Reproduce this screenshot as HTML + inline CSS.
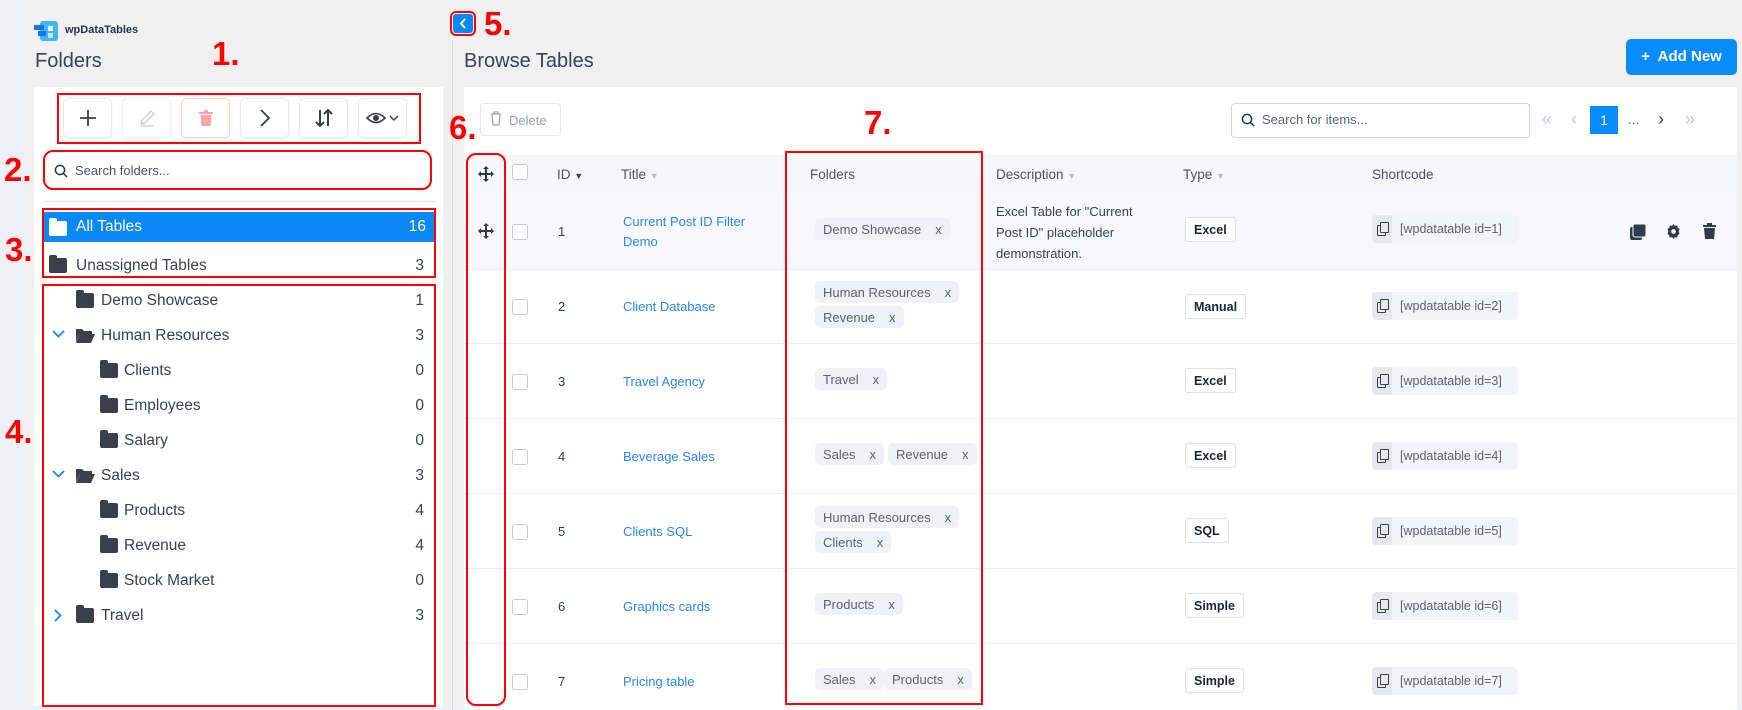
<!DOCTYPE html>
<html><head><meta charset="utf-8">
<style>
*{box-sizing:border-box;margin:0;padding:0}
body{width:1742px;height:710px;overflow:hidden;background:#f0f0f1;font-family:"Liberation Sans",Arial,sans-serif;color:#323b4b;position:relative}
.a{position:absolute}
.red{position:absolute;border:2px solid #f00}
.lbl{position:absolute;color:#f00;font-weight:bold;font-size:33px;line-height:1}
.tb{position:absolute;top:98px;width:49px;height:40px;border:1px solid #e8eaef;border-radius:5px;background:#fff;display:flex;align-items:center;justify-content:center;box-shadow:0 1px 2px rgba(0,0,0,.06)}
.tr{position:absolute;left:44px;width:390px;height:34px;font-size:15.5px;color:#3a4150}
.tr .t{position:absolute;top:8px}
.tr .c{position:absolute;right:10px;top:8px}
.fi{position:absolute;top:9px;width:18px;height:15px;background:#3a3f4a;border-radius:2px}
.fi:before{content:"";position:absolute;left:0;top:-3px;width:8px;height:4px;background:#3a3f4a;border-radius:2px 2px 0 0}
.th{position:absolute;top:167px;font-size:13.5px;color:#4b5361}
.cb{position:absolute;left:512px;width:16px;height:16px;border:1px solid #c5cad3;border-radius:3px;background:#fff}
.row{position:absolute;left:464px;width:1273px;border-top:1px solid #eceef2}
.cell{position:absolute;font-size:13px}
.link{color:#2a86f3}
.tag{position:absolute;height:22px;background:#f0f1f6;border-radius:5px;font-size:13px;color:#5b6270;padding:4px 8px;white-space:nowrap}
.tag i{font-style:normal;margin-left:14px}
.badge{position:absolute;left:1185px;height:25px;border:1px solid #dde0e6;border-radius:3px;background:#fff;font-size:12.5px;font-weight:bold;color:#1f2633;padding:5px 8px}
.sc{position:absolute;left:1372px;height:28px;width:146px;background:#f3f4f7;border-radius:4px;font-size:12.5px;color:#5b6270}
.sc .ic{position:absolute;left:0;top:0;width:20px;height:28px;background:#e6e8ec;border-radius:4px 0 0 4px}
.sc .ic:before{content:"";position:absolute;left:5px;top:10px;width:7px;height:9px;border:1.3px solid #3a3f4a;border-radius:1px;background:#e6e8ec}
.sc .ic:after{content:"";position:absolute;left:8px;top:7px;width:7px;height:9px;border:1.3px solid #3a3f4a;border-radius:1px;background:#e6e8ec}
.sc span{position:absolute;left:28px;top:7px}
</style></head><body>
<div class="a" style="left:0;top:0;width:24px;height:710px;background:#edf1f7"></div>
<div class="a" style="left:0;top:706px;width:1742px;height:4px;background:#edf1f7"></div>
<svg class="a" style="left:34px;top:21px" width="24" height="20" viewBox="0 0 24 20"><rect x="6" y="0" width="18" height="20" rx="3" fill="#3eb8f5"/><rect x="0" y="4" width="10" height="5" fill="#1a73e8"/><rect x="4" y="10" width="8" height="5" fill="#1a73e8"/><rect x="14" y="5" width="5" height="5" fill="#fff"/><rect x="14" y="12" width="5" height="5" fill="#bfe9ff"/></svg>
<div class="a" style="left:65px;top:24px;font-size:11px;font-weight:bold;color:#2a3140">wpDataTables</div>
<div class="a" style="left:35px;top:50px;font-size:20px;color:#3a4150">Folders</div>
<div class="a" style="left:34px;top:87px;width:409px;height:619px;background:#fff"></div>
<div class="tb" style="left:63px"><svg width="18" height="18"><path d="M9 1v16M1 9h16" stroke="#3a3f4a" stroke-width="1.8"/></svg></div>
<div class="tb" style="left:122px;border-color:#f0f1f4"><svg width="18" height="18"><path d="M3 15l1-4 9-9 3 3-9 9z M3 17h12" stroke="#c4c7cd" stroke-width="1.2" fill="none"/></svg></div>
<div class="tb" style="left:181px;border-color:#fbd1d1"><svg width="14" height="16"><rect x="0" y="2" width="14" height="2" fill="#f7a6a6"/><rect x="5" y="0" width="4" height="2" fill="#f7a6a6"/><path d="M1.5 5h11l-1 11h-9z" fill="#f7a6a6"/></svg></div>
<div class="tb" style="left:240px"><svg width="12" height="18"><path d="M2 1l8 8-8 8" stroke="#3a3f4a" stroke-width="1.8" fill="none"/></svg></div>
<div class="tb" style="left:299px"><svg width="18" height="18"><path d="M5 1v16M1 13l4 4 4-4M13 17V1M9 5l4-4 4 4" stroke="#3a3f4a" stroke-width="2" fill="none"/></svg></div>
<div class="tb" style="left:358px"><svg width="34" height="14"><path d="M1 7q9-9 18 0q-9 9-18 0z" stroke="#3a3f4a" stroke-width="1.6" fill="none"/><circle cx="10" cy="7" r="3" fill="#3a3f4a"/><path d="M24 5l4 4 4-4" stroke="#3a3f4a" stroke-width="1.5" fill="none"/></svg></div>
<div class="red" style="left:57px;top:93px;width:364px;height:51px"></div>
<div class="a" style="left:43px;top:150px;width:389px;height:40px;border:2px solid #f00;border-radius:10px;background:#fff"></div>
<svg class="a" style="left:54px;top:164px" width="14" height="14"><circle cx="6" cy="6" r="4.6" stroke="#2a3140" stroke-width="1.5" fill="none"/><path d="M9.5 9.5l3.5 3.5" stroke="#2a3140" stroke-width="1.5"/></svg>
<div class="a" style="left:75px;top:163px;font-size:13px;color:#4b5361">Search folders...</div>
<div class="a" style="left:44px;top:201px;width:392px;height:1px;background:#dcdfe4"></div>
<div class="a" style="left:44px;top:212px;width:392px;height:30px;background:#0a88f5"></div>
<div class="fi" style="left:49px;top:221px;background:#fff"></div><div class="a" style="left:49px;top:218px;width:8px;height:4px;background:#fff;border-radius:2px 2px 0 0"></div>
<div class="a" style="left:76px;top:218px;font-size:15.5px;color:#fff">All Tables</div>
<div class="a" style="left:400px;top:218px;width:26px;text-align:right;font-size:15.5px;color:#fff">16</div>
<div class="tr" style="top:249px"><div class="fi" style="left:5px"></div><div class="t" style="left:32px">Unassigned Tables</div><div class="c">3</div></div>
<div class="red" style="left:42px;top:208px;width:394px;height:70px"></div>
<div class="tr" style="top:284px"><div class="fi" style="left:32px"></div><div class="t" style="left:57px">Demo Showcase</div><div class="c">1</div></div>
<div class="tr" style="top:319px"><svg class="a" style="left:8px;top:11px" width="13" height="8"><path d="M1 1l5.5 5.5L12 1" stroke="#1a86f0" stroke-width="1.8" fill="none"/></svg><svg class="a" style="left:32px;top:8px" width="19" height="16"><path d="M0 2h6l2 2h8v3H4L0 15z" fill="#3a3f4a"/><path d="M4 7h15l-4 9H0z" fill="#3a3f4a"/></svg><div class="t" style="left:57px">Human Resources</div><div class="c">3</div></div>
<div class="tr" style="top:354px"><div class="fi" style="left:56px"></div><div class="t" style="left:80px">Clients</div><div class="c">0</div></div>
<div class="tr" style="top:389px"><div class="fi" style="left:56px"></div><div class="t" style="left:80px">Employees</div><div class="c">0</div></div>
<div class="tr" style="top:424px"><div class="fi" style="left:56px"></div><div class="t" style="left:80px">Salary</div><div class="c">0</div></div>
<div class="tr" style="top:459px"><svg class="a" style="left:8px;top:11px" width="13" height="8"><path d="M1 1l5.5 5.5L12 1" stroke="#1a86f0" stroke-width="1.8" fill="none"/></svg><svg class="a" style="left:32px;top:8px" width="19" height="16"><path d="M0 2h6l2 2h8v3H4L0 15z" fill="#3a3f4a"/><path d="M4 7h15l-4 9H0z" fill="#3a3f4a"/></svg><div class="t" style="left:57px">Sales</div><div class="c">3</div></div>
<div class="tr" style="top:494px"><div class="fi" style="left:56px"></div><div class="t" style="left:80px">Products</div><div class="c">4</div></div>
<div class="tr" style="top:529px"><div class="fi" style="left:56px"></div><div class="t" style="left:80px">Revenue</div><div class="c">4</div></div>
<div class="tr" style="top:564px"><div class="fi" style="left:56px"></div><div class="t" style="left:80px">Stock Market</div><div class="c">0</div></div>
<div class="tr" style="top:599px"><svg class="a" style="left:10px;top:10px" width="8" height="13"><path d="M1 1l5.5 5.5L1 12" stroke="#1a86f0" stroke-width="1.8" fill="none"/></svg><div class="fi" style="left:32px"></div><div class="t" style="left:57px">Travel</div><div class="c">3</div></div>
<div class="red" style="left:42px;top:284px;width:394px;height:423px"></div>
<div class="a" style="left:452px;top:40px;width:1px;height:670px;background:#dcdfe6"></div>
<div class="a" style="left:450px;top:11px;width:26px;height:25px;border:2px solid #f00;border-radius:6px"></div>
<div class="a" style="left:453px;top:14px;width:20px;height:19px;background:#0a88f5;border-radius:3px"></div>
<svg class="a" style="left:459px;top:18px" width="8" height="11"><path d="M6 1L2 5.5 6 10" stroke="#fff" stroke-width="2" fill="none"/></svg>
<div class="a" style="left:464px;top:50px;font-size:20px;color:#3a4150">Browse Tables</div>
<div class="a" style="left:1626px;top:39px;width:111px;height:36px;background:#0a8cff;border-radius:5px;color:#fff;font-size:15px;font-weight:bold;padding-top:9px;text-align:center">+&nbsp; Add New</div>
<div class="a" style="left:464px;top:87px;width:1273px;height:623px;background:#fff"></div>
<div class="a" style="left:480px;top:103px;width:81px;height:33px;border:1px solid #e6e8ec;border-radius:4px;font-size:13px;color:#9aa0aa;padding:9px 0 0 28px">Delete</div>
<svg class="a" style="left:490px;top:111px" width="12" height="15"><path d="M1 3h10M4 3V1h4v2M2 4l1 10h6l1-10" stroke="#9aa0aa" stroke-width="1.2" fill="none"/></svg>
<div class="a" style="left:1231px;top:103px;width:299px;height:35px;border:1px solid #d3d7de;border-radius:4px"></div>
<svg class="a" style="left:1241px;top:113px" width="14" height="14"><circle cx="6" cy="6" r="4.6" stroke="#2a3140" stroke-width="1.5" fill="none"/><path d="M9.5 9.5l3.5 3.5" stroke="#2a3140" stroke-width="1.5"/></svg>
<div class="a" style="left:1262px;top:112px;font-size:13px;color:#5b6270">Search for items...</div>
<div class="a" style="left:1542px;top:109px;font-size:18px;color:#c3c7cf">«</div>
<div class="a" style="left:1571px;top:109px;font-size:18px;color:#c3c7cf">‹</div>
<div class="a" style="left:1590px;top:106px;width:28px;height:28px;background:#0a8cff;color:#fff;font-size:14px;text-align:center;padding-top:6px">1</div>
<div class="a" style="left:1628px;top:111px;font-size:14px;color:#5b6270">...</div>
<div class="a" style="left:1658px;top:109px;font-size:18px;color:#3a4150">›</div>
<div class="a" style="left:1685px;top:109px;font-size:18px;color:#c3c7cf">»</div>
<div class="a" style="left:464px;top:155px;width:1273px;height:37px;background:#f6f7f9"></div>
<div class="a" style="left:464px;top:192px;width:1273px;height:77px;background:#f8f8fa"></div>
<svg class="a" style="left:478px;top:166px" width="16" height="16" viewBox="0 0 16 16"><path d="M8 0l3 3H9v4h4V5l3 3-3 3V9H9v4h2l-3 3-3-3h2V9H3v2L0 8l3-3v2h4V3H5z" fill="#2f3a4d"/></svg>
<div class="cb" style="top:164px"></div>
<div class="th" style="left:557px">ID <span style="font-size:9px;color:#3a4150">▼</span></div>
<div class="th" style="left:621px">Title <span style="font-size:9px;color:#b8bdc6">▼</span></div>
<div class="th" style="left:810px">Folders</div>
<div class="th" style="left:996px">Description <span style="font-size:9px;color:#b8bdc6">▼</span></div>
<div class="th" style="left:1183px">Type <span style="font-size:9px;color:#b8bdc6">▼</span></div>
<div class="th" style="left:1372px">Shortcode</div>
<div class="row" style="top:269px"></div><div class="row" style="top:343px"></div><div class="row" style="top:418px"></div><div class="row" style="top:493px"></div><div class="row" style="top:568px"></div><div class="row" style="top:643px"></div>

<svg class="a" style="left:478px;top:223px" width="16" height="16" viewBox="0 0 16 16"><path d="M8 0l3 3H9v4h4V5l3 3-3 3V9H9v4h2l-3 3-3-3h2V9H3v2L0 8l3-3v2h4V3H5z" fill="#2f3a4d"/></svg>
<div class="cb" style="top:224px"></div><div class="cell" style="left:558px;top:224px">1</div>
<div class="cell link" style="left:623px;top:212px;line-height:20px">Current Post ID Filter<br>Demo</div>
<div class="tag" style="left:815px;top:218px">Demo Showcase<i>x</i></div>
<div class="cell" style="left:996px;top:201px;line-height:21px;color:#3a4150">Excel Table for "Current<br>Post ID" placeholder<br>demonstration.</div>
<div class="badge" style="top:217px">Excel</div>
<div class="sc" style="top:215px"><div class="ic"></div><span>[wpdatatable id=1]</span></div>
<svg class="a" style="left:1630px;top:224px" width="16" height="16"><rect x="0" y="3" width="12" height="13" rx="2" fill="#2f3a4d"/><rect x="3" y="0" width="13" height="13" rx="2" fill="#2f3a4d" stroke="#f8f8fa" stroke-width="1"/></svg>
<svg class="a" style="left:1666px;top:224px" width="15" height="15" viewBox="0 0 16 16"><path d="M8 0l1.5 2 2.5-.5.5 2.5 2 1.5-1 2.5 1 2.5-2 1.5-.5 2.5-2.5-.5L8 16l-1.5-2-2.5.5-.5-2.5-2-1.5 1-2.5-1-2.5 2-1.5.5-2.5 2.5.5z" fill="#2f3a4d"/><circle cx="8" cy="8" r="2.5" fill="#f8f8fa"/></svg>
<svg class="a" style="left:1703px;top:223px" width="13" height="16"><rect x="0" y="2" width="13" height="2" fill="#2f3a4d"/><rect x="4" y="0" width="5" height="2" fill="#2f3a4d"/><path d="M1 5h11l-1 11H2z" fill="#2f3a4d"/></svg>

<div class="cb" style="top:299px"></div><div class="cell" style="left:558px;top:299px">2</div>
<div class="cell link" style="left:623px;top:299px">Client Database</div>
<div class="tag" style="left:815px;top:281px">Human Resources<i>x</i></div>
<div class="tag" style="left:815px;top:306px">Revenue<i>x</i></div>
<div class="badge" style="top:294px">Manual</div>
<div class="sc" style="top:292px"><div class="ic"></div><span>[wpdatatable id=2]</span></div>

<div class="cb" style="top:374px"></div><div class="cell" style="left:558px;top:374px">3</div>
<div class="cell link" style="left:623px;top:374px">Travel Agency</div>
<div class="tag" style="left:815px;top:368px">Travel<i>x</i></div>
<div class="badge" style="top:368px">Excel</div>
<div class="sc" style="top:367px"><div class="ic"></div><span>[wpdatatable id=3]</span></div>

<div class="cb" style="top:449px"></div><div class="cell" style="left:558px;top:449px">4</div>
<div class="cell link" style="left:623px;top:449px">Beverage Sales</div>
<div class="tag" style="left:815px;top:443px">Sales<i>x</i></div>
<div class="tag" style="left:888px;top:443px">Revenue<i>x</i></div>
<div class="badge" style="top:443px">Excel</div>
<div class="sc" style="top:442px"><div class="ic"></div><span>[wpdatatable id=4]</span></div>

<div class="cb" style="top:524px"></div><div class="cell" style="left:558px;top:524px">5</div>
<div class="cell link" style="left:623px;top:524px">Clients SQL</div>
<div class="tag" style="left:815px;top:506px">Human Resources<i>x</i></div>
<div class="tag" style="left:815px;top:531px">Clients<i>x</i></div>
<div class="badge" style="top:518px">SQL</div>
<div class="sc" style="top:517px"><div class="ic"></div><span>[wpdatatable id=5]</span></div>

<div class="cb" style="top:599px"></div><div class="cell" style="left:558px;top:599px">6</div>
<div class="cell link" style="left:623px;top:599px">Graphics cards</div>
<div class="tag" style="left:815px;top:593px">Products<i>x</i></div>
<div class="badge" style="top:593px">Simple</div>
<div class="sc" style="top:592px"><div class="ic"></div><span>[wpdatatable id=6]</span></div>

<div class="cb" style="top:674px"></div><div class="cell" style="left:558px;top:674px">7</div>
<div class="cell link" style="left:623px;top:674px">Pricing table</div>
<div class="tag" style="left:815px;top:668px">Sales<i>x</i></div>
<div class="tag" style="left:884px;top:668px">Products<i>x</i></div>
<div class="badge" style="top:668px">Simple</div>
<div class="sc" style="top:667px"><div class="ic"></div><span>[wpdatatable id=7]</span></div>

<div class="a" style="left:466px;top:153px;width:40px;height:553px;border:2px solid #f00;border-radius:10px"></div>
<div class="red" style="left:785px;top:151px;width:198px;height:554px"></div>
<div class="lbl" style="left:212px;top:37px">1.</div>
<div class="lbl" style="left:4px;top:153px">2.</div>
<div class="lbl" style="left:5px;top:233px">3.</div>
<div class="lbl" style="left:5px;top:415px">4.</div>
<div class="lbl" style="left:484px;top:7px">5.</div>
<div class="lbl" style="left:449px;top:111px">6.</div>
<div class="lbl" style="left:864px;top:106px">7.</div>
</body></html>
